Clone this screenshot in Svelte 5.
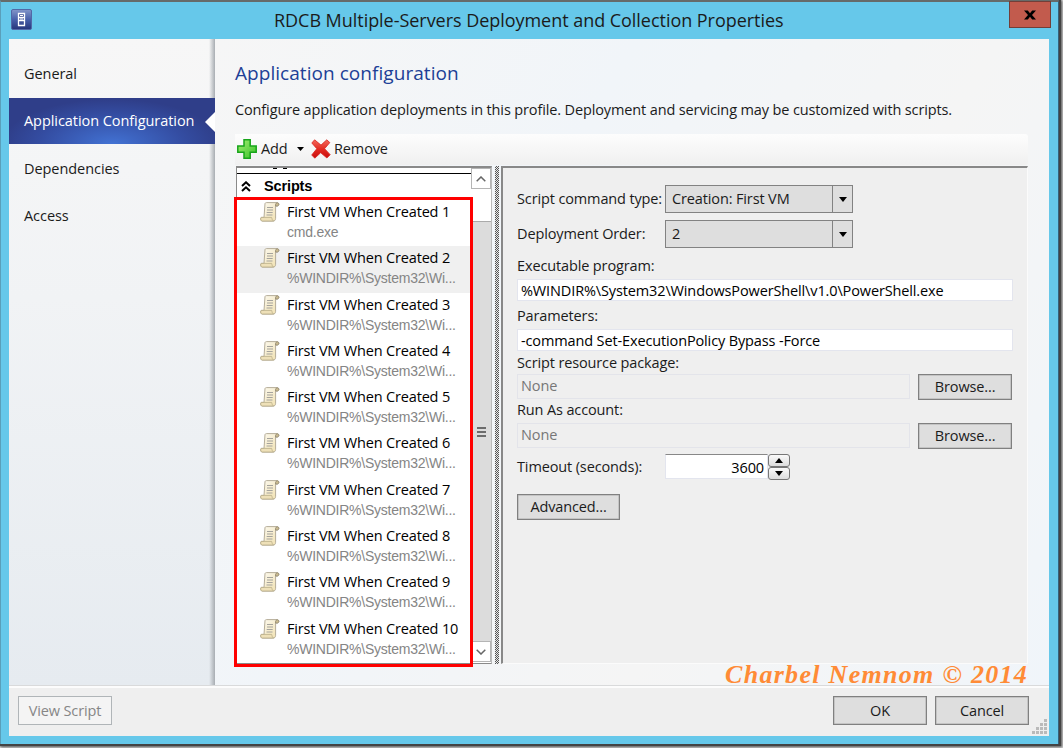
<script>
    const pages = ['General', 'Application Configuration', 'Dependencies', 'Access'];
    let activePage = 'Application Configuration';

    const scripts = Array.from({ length: 10 }, (_, i) => ({
        name: `First VM When Created ${i + 1}`,
        program: i === 0 ? 'cmd.exe' : '%WINDIR%\\System32\\Wi...'
    }));
    let selected = 1;

    let program = '%WINDIR%\\System32\\WindowsPowerShell\\v1.0\\PowerShell.exe';
    let parameters = '-command Set-ExecutionPolicy Bypass -Force';
    let timeout = 3600;
</script>

<main>
    <div class="window">
        <header>
            <svg class="app-icon" width="21" height="21" viewBox="0 0 21 21">
                <defs>
                    <linearGradient id="icon-fill" x1="0" y1="0" x2="0" y2="1">
                        <stop offset="0" stop-color="#8396c9" />
                        <stop offset=".5" stop-color="#4860aa" />
                        <stop offset="1" stop-color="#25347a" />
                    </linearGradient>
                </defs>
                <rect x=".5" y=".5" width="20" height="20" rx="1.5" fill="url(#icon-fill)" stroke="#5268a6" />
                <path d="M7.5 4.5h6v12h-6zM7 8.5h7M7 11.5h7" fill="#3e5197" stroke="#fff" stroke-width="1.3" />
                <path d="M9 6.5h3M9 10h3" stroke="#fff" />
            </svg>
            <h1>RDCB Multiple-Servers Deployment and Collection Properties</h1>
            <button class="close" aria-label="Close">
                <svg width="12" height="10" viewBox="0 0 12 11" preserveAspectRatio="none">
                    <path d="M0 .5h3.8L6 3.6 8.2.5H12L8 5.4l4 5.1H8.2L6 7.3l-2.2 3.2H0l4-5.1z" />
                </svg>
            </button>
        </header>

        <div class="content">
            <div class="body">
                <nav>
                    {#each pages as page}
                        <button class="page" class:active={page === activePage} on:click={() => (activePage = page)}>
                            <span>{page}</span>
                        </button>
                    {/each}
                </nav>

                <section class="config">
                    <h2>Application configuration</h2>
                    <p class="intro">Configure application deployments in this profile. Deployment and servicing may be customized with scripts.</p>

                    <div class="toolbar">
                        <svg width="20" height="20" viewBox="0 0 20 20">
                            <defs>
                                <linearGradient id="plus" x1="0" y1="0" x2="1" y2="1">
                                    <stop offset="0" stop-color="#a5ee72" />
                                    <stop offset="1" stop-color="#37c229" />
                                </linearGradient>
                            </defs>
                            <path d="M7 .8h6.2V7h6v6.2h-6v6H7v-6H.8V7H7z" fill="url(#plus)" stroke="#18a51b" stroke-width="1.5" />
                        </svg>
                        <span class="add">Add</span>
                        <svg class="drop" width="7" height="4" viewBox="0 0 7 4"><path d="M0 0h7L3.5 4z" /></svg>
                        <svg width="20" height="20" viewBox="0 0 20 20">
                            <defs>
                                <linearGradient id="cross" x1="0" y1="0" x2="0" y2="1">
                                    <stop offset="0" stop-color="#f36a5d" />
                                    <stop offset=".5" stop-color="#e42b22" />
                                    <stop offset="1" stop-color="#c80d0d" />
                                </linearGradient>
                            </defs>
                            <path d="M3.6.8 10 6.1 15.8.8l3 2.8-5.2 6.1 5.6 6-3.3 3.3-6.2-5.3-5.9 5.5-3.1-3.2 5.1-6.3L.8 4z" fill="url(#cross)" stroke="#d9251f" stroke-width=".8" />
                        </svg>
                        <span class="remove">Remove</span>
                    </div>

                    <div class="split">
                        <div class="tree">
                            <div class="list">
                                <div class="cut"><i></i><i></i></div>
                                <div class="group">
                                    <svg width="10" height="11" viewBox="0 0 10 11">
                                        <path d="M1 5l4-3.7L9 5M1 10l4-3.7L9 10" fill="none" stroke="#000" stroke-width="2" />
                                    </svg>
                                    <span>Scripts</span>
                                </div>
                                {#each scripts as script, i}
                                    <div class="item" class:selected={i === selected}>
                                        <svg width="20" height="20" viewBox="0 0 20 20">
                                            <defs>
                                                <linearGradient id="paper-{i}" x1="0" y1="0" x2="1" y2="1">
                                                    <stop offset="0" stop-color="#fdfbf3" />
                                                    <stop offset="1" stop-color="#f0dfac" />
                                                </linearGradient>
                                            </defs>
                                            <path d="M5 1.5C5.5.6 6 .6 7 .6h10.3c1.8 0 2.2 3.2 0 3.4h-1.7v12.3c0 2-1 2.8-2.7 2.8H2.2C.3 19 .1 15.5 1.5 15.4H4z" fill="url(#paper-{i})" stroke="#b5ad99" />
                                            <path d="M1.2 15.4h10.5c.4 1.4.3 2.8 1.8 3.6H2.2c-1.5-.2-1.8-2.3-1-3.6z" fill="#eee0b8" stroke="#b9ad88" stroke-width=".8" />
                                            <path d="M15.6 4c-.3-1.4.1-3 1.5-3.2 2.2 0 2.3 2.9.3 3.2z" fill="#cdbd91" stroke="#8e856e" stroke-width=".8" />
                                            <path d="M7 5.5h6M7 8h6M6.7 10.5h6M6.5 13h6" stroke="#a5a39d" />
                                        </svg>
                                        <div class="texts">
                                            <div class="name">{script.name}</div>
                                            <div class="program">{script.program}</div>
                                        </div>
                                    </div>
                                {/each}
                            </div>
                            <div class="scrollbar">
                                <div class="arrow">
                                    <svg width="10" height="6" viewBox="0 0 10 6"><path d="M.7 5.3 5 1l4.3 4.3" /></svg>
                                </div>
                                <div class="thumb"></div>
                                <div class="track"><i></i><i></i><i></i></div>
                                <div class="arrow">
                                    <svg width="10" height="6" viewBox="0 0 10 6"><path d="M.7.7 5 5 9.3.7" /></svg>
                                </div>
                            </div>
                            <div class="highlight"></div>
                        </div>

                        <div class="splitter"></div>

                        <form class="details" on:submit|preventDefault>
                            <div class="row first">
                                <span class="label">Script command type:</span>
                                <div class="combo"><span>Creation: First VM</span><b><svg width="8" height="5" viewBox="0 0 8 5"><path d="M0 0h8L4 5z" /></svg></b></div>
                            </div>
                            <div class="row second">
                                <span class="label">Deployment Order:</span>
                                <div class="combo"><span>2</span><b><svg width="8" height="5" viewBox="0 0 8 5"><path d="M0 0h8L4 5z" /></svg></b></div>
                            </div>
                            <label class="label exec" for="program">Executable program:</label>
                            <input id="program" type="text" bind:value={program}>
                            <label class="label params" for="parameters">Parameters:</label>
                            <input id="parameters" type="text" bind:value={parameters}>
                            <span class="label package">Script resource package:</span>
                            <div class="row picker">
                                <div class="none">None</div>
                                <button type="button" class="browse">Browse...</button>
                            </div>
                            <span class="label account">Run As account:</span>
                            <div class="row picker">
                                <div class="none">None</div>
                                <button type="button" class="browse">Browse...</button>
                            </div>
                            <div class="row timeout">
                                <label class="label" for="timeout">Timeout (seconds):</label>
                                <input id="timeout" type="text" bind:value={timeout}>
                                <div class="spin">
                                    <button type="button" aria-label="Increase" on:click={() => (timeout += 1)}><svg width="8" height="5" viewBox="0 0 8 5"><path d="M0 5h8L4 0z" /></svg></button>
                                    <button type="button" aria-label="Decrease" on:click={() => (timeout -= 1)}><svg width="8" height="5" viewBox="0 0 8 5"><path d="M0 0h8L4 5z" /></svg></button>
                                </div>
                            </div>
                            <button type="button" class="advanced">Advanced...</button>
                        </form>
                    </div>
                </section>
            </div>

            <footer>
                <button class="view" disabled>View Script</button>
                <button class="ok">OK</button>
                <button class="cancel">Cancel</button>
            </footer>
            <svg class="grip" width="15" height="15" viewBox="0 0 15 15">
                <path d="M12 0h3v3h-3zM8 4h3v3H8zM12 4h3v3h-3zM4 8h3v3H4zM8 8h3v3H8zM12 8h3v3h-3zM0 12h3v3H0zM4 12h3v3H4zM8 12h3v3H8zM12 12h3v3h-3z" fill="#bababa" />
            </svg>
        </div>
        <div class="watermark">Charbel Nemnom © 2014</div>
    </div>
</main>

<style>
    :global(body) {
        margin: 0;
        background: #f1f1f1;
    }

    main {
        width: 1063px;
        height: 748px;
        overflow: hidden;
        font-family: "Open Sans", "Noto Sans", sans-serif;
        font-size: 14.5px;
        line-height: 20px;
        letter-spacing: -0.13px;
        color: #1b1b1b;
    }

    button, input {
        box-sizing: border-box;
        padding: 0;
        margin: 0;
        border: 0;
        border-radius: 0;
        font: inherit;
        color: inherit;
        letter-spacing: inherit;
    }

    h1, h2, p {
        margin: 0;
        font-weight: normal;
    }

    svg {
        display: block;
        flex: none;
    }

    .window {
        position: relative;
        box-sizing: border-box;
        width: 1059px;
        height: 744px;
        padding: 0 9px 8px 8px;
        border-top: 2px solid #666b6a;
        border-left: 1px solid #5a9fba;
        border-right: 1px solid #37617a;
        background: #66c8ea;
        box-shadow: 1px 1px 1px 1px #444, 2px 2px 3px 2px #777;
    }

    header {
        display: flex;
        height: 37px;
    }

    .app-icon {
        margin: 7px 0 0 2px;
    }

    h1 {
        width: 977px;
        padding-top: 8px;
        font-size: 18px;
        letter-spacing: -0.04px;
        white-space: nowrap;
        text-indent: 242px;
    }

    .close {
        display: flex;
        flex: none;
        align-items: center;
        justify-content: center;
        width: 42px;
        height: 27px;
        margin: -1px -2px 0 0;
        border: 1px solid #733e38;
        background: #c25b4d;
    }

    .content {
        position: relative;
        height: 697px;
        background: #efefef;
    }

    .body {
        display: flex;
        height: 646px;
        border-bottom: 1px solid #d9dadb;
        box-shadow: 0 2px 0 #fcfcfc;
    }

    nav {
        box-sizing: border-box;
        flex: none;
        width: 206px;
        padding-top: 11px;
        background: linear-gradient(90deg, transparent 200px, #a8adb2), linear-gradient(#f7f7f7, #f1f3f5 40%, #e6ebf0);
    }

    .page {
        display: block;
        position: relative;
        width: 206px;
        height: 47.5px;
        padding-left: 15px;
        background: none;
        text-align: left;
        letter-spacing: -0.06px;
    }

    .page.active {
        height: 46px;
        margin: 0.5px 0 1px;
        background: radial-gradient(ellipse 110px 45px at 50% 100%, #4272d3, #344da2 65%, #2f3e89);
        color: #fff;
    }

    .page.active::after {
        content: '';
        position: absolute;
        right: 0;
        top: 14px;
        border: solid transparent;
        border-width: 10px 10px 10px 0;
        border-right-color: #fff;
    }

    .config {
        box-sizing: border-box;
        width: 834px;
        padding: 22px 21px 0 20px;
        background: linear-gradient(120deg, #f6f6f6, #f1f5f9 35%, #f5f5f5 65%, #f0f5fa);
    }

    h2 {
        height: 24px;
        line-height: 24px;
        font-size: 19px;
        letter-spacing: 0.05px;
        color: #203f96;
        white-space: nowrap;
    }

    .intro {
        height: 20px;
        margin-top: 15px;
        white-space: nowrap;
    }

    .toolbar {
        display: flex;
        align-items: center;
        box-sizing: border-box;
        height: 31px;
        margin: 14px 0 1px;
        padding: 0 0 2px 2px;
        background: linear-gradient(#fdfdfd, #f0f0f0);
        border-radius: 0 3px 3px 0;
    }

    .add {
        width: 36px;
        margin-left: 4px;
    }

    .drop {
        margin-right: 7px;
    }

    .remove {
        margin-left: 3px;
    }

    .split {
        display: flex;
        height: 498px;
    }

    .tree {
        position: relative;
        box-sizing: border-box;
        display: flex;
        width: 256px;
        margin-left: 1px;
        border: 1px solid #8a8a8a;
        border-top-width: 2px;
        border-right-color: #bbb;
        background: #fff;
    }

    .list {
        width: 234px;
        overflow: hidden;
    }

    .cut {
        display: flex;
        gap: 6px;
        height: 5px;
        padding-left: 36px;
        border-bottom: 1px solid #000;
    }

    .cut i {
        width: 4px;
        height: 1px;
        background: #000;
    }

    .group {
        display: flex;
        align-items: center;
        box-sizing: border-box;
        height: 26px;
        padding: 0 0 2px 4px;
        font: bold 14.5px "Liberation Sans", Arial, sans-serif;
        color: #000;
    }

    .group span {
        margin-left: 13px;
    }

    .item {
        display: flex;
        box-sizing: border-box;
        height: 46.3px;
        padding: 2px 0 0 23px;
    }

    .item.selected {
        background: #f0f0f0;
    }

    .texts {
        margin-left: 7px;
        white-space: nowrap;
    }

    .name {
        line-height: 20px;
        color: #000;
        letter-spacing: -0.17px;
    }

    .program {
        font: 14px/21px "Liberation Sans", Arial, sans-serif;
        color: #858585;
        letter-spacing: -0.24px;
    }

    .scrollbar {
        display: flex;
        flex-direction: column;
        width: 20px;
        height: 494px;
        background: #dcdcdc;
    }

    .arrow {
        display: flex;
        flex: none;
        align-items: center;
        justify-content: center;
        box-sizing: border-box;
        height: 21px;
        border: 1px solid #b5b5b5;
        background: #fff;
    }

    .arrow path {
        fill: none;
        stroke: #666;
        stroke-width: 1.5;
    }

    .thumb {
        flex: none;
        height: 32px;
        border-bottom: 1px solid #aaa;
        background: #fff;
    }

    .track {
        display: flex;
        flex: 1;
        flex-direction: column;
        align-items: center;
        justify-content: center;
        gap: 2px;
    }

    .track i {
        width: 9px;
        height: 2px;
        background: #6c6c6c;
    }

    .highlight {
        position: absolute;
        left: -3px;
        top: 29px;
        box-sizing: border-box;
        width: 239px;
        height: 470px;
        border: 3px solid #f00;
    }

    .splitter {
        width: 4px;
        margin: 0 2px 0 3px;
        background: repeating-conic-gradient(#555 0 25%, #e8e8e8 0 50%) 0 0 / 2px 2px;
    }

    .details {
        box-sizing: border-box;
        width: 527px;
        padding: 17px 15px 0 14px;
        border: 2px solid #888;
        border-right: 1px solid #fbfbfb;
        border-bottom: 1px solid #fbfbfb;
        background: #efefef;
        white-space: nowrap;
    }

    .row {
        display: flex;
    }

    .row.first {
        height: 35px;
    }

    .row.second {
        height: 36px;
    }

    .row .label {
        width: 148px;
        padding-top: 4px;
    }

    .combo {
        display: flex;
        box-sizing: border-box;
        width: 188px;
        height: 28px;
        border: 1px solid #828282;
        background: #dedede;
        line-height: 26px;
    }

    .combo span {
        flex: 1;
        padding-left: 6px;
    }

    .combo b {
        display: flex;
        align-items: center;
        justify-content: center;
        width: 19px;
        border-left: 1px solid #828282;
    }

    .label {
        display: block;
    }

    .exec {
        height: 23px;
    }

    input {
        display: block;
        width: 496px;
        height: 22px;
        padding: 1px 3px 0;
        border: 1px solid #e3e5ee;
        background: #fff;
        color: #000;
    }

    .params {
        height: 23px;
        padding-top: 5px;
    }

    .package {
        height: 21px;
        padding-top: 2px;
    }

    .account {
        height: 23px;
    }

    .none {
        box-sizing: border-box;
        width: 394px;
        height: 25px;
        margin-right: 8px;
        padding: 1px 3px;
        border: 1px solid #e3e4ea;
        color: #777;
    }

    .browse, .advanced, footer button {
        border: 1px solid #808080;
        background: #dedede;
        box-shadow: inset 0 0 0 0.5px #aaa;
    }

    .browse {
        width: 94px;
        height: 26px;
    }

    .picker {
        height: 26px;
    }

    .timeout {
        margin-top: 5px;
    }

    .timeout .label {
        padding-top: 3px;
    }

    .timeout input {
        width: 103px;
        height: 25px;
        border-top-color: #888;
        text-align: right;
    }

    .spin button {
        display: flex;
        align-items: center;
        justify-content: center;
        width: 22px;
        height: 13px;
        border: 1px solid #777;
        border-radius: 3px;
        background: linear-gradient(#fafafa, #ddd);
    }

    .advanced {
        display: block;
        width: 103px;
        height: 26px;
        margin-top: 14px;
    }

    footer {
        display: flex;
        gap: 8px;
        padding: 10px 20px 0 9px;
    }

    footer button {
        width: 94px;
        height: 29px;
    }

    footer .view {
        margin-right: auto;
        border-color: #b0b5b8;
        background: #f4f4f4;
        box-shadow: none;
        color: #868686;
    }

    .grip {
        position: absolute;
        right: 2px;
        bottom: 2px;
    }

    .watermark {
        position: absolute;
        left: 724px;
        top: 659px;
        font: italic bold 26px/28px "Liberation Serif", "Times New Roman", serif;
        letter-spacing: 1.3px;
        color: #ff8b36;
        white-space: nowrap;
    }
</style>
